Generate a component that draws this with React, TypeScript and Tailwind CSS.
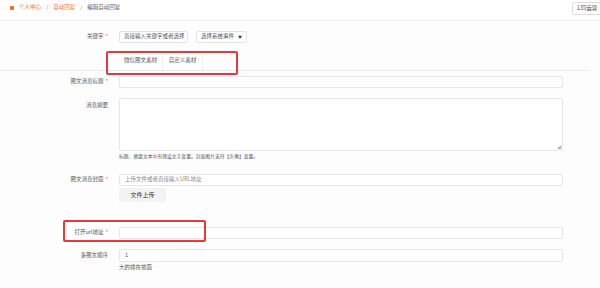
import React from "react";

const Req = () => <span className="text-[#e4393c] ml-[2px]">*</span>;

function Row({ label, required, top, children }: { label: string; required?: boolean; top?: boolean; children: React.ReactNode }) {
  return (
    <div className={`flex ${top ? "items-start" : "items-center"}`}>
      <div className={`w-[119px] pr-[11px] text-right text-[#555] whitespace-nowrap ${top ? "pt-[5px]" : ""}`}>
        {label}
        {required && <Req />}
      </div>
      <div className="w-[444px]">{children}</div>
    </div>
  );
}

export default function App() {
  return (
    <div
      className="relative w-[600px] h-[288px] overflow-hidden bg-[#fdfdfd] text-[5.5px] leading-none"
      style={{ fontFamily: '"Noto Sans CJK SC", "Noto Sans", sans-serif' }}
    >
      <div className="flex h-[21px] items-start justify-between border-b border-[#f0f0f0] bg-white pl-[10px]">
        <div className="flex items-center gap-[3px] pt-[5px] text-[#ff6a2a]">
          <span className="mr-[2px] inline-block h-[4px] w-[4px] rounded-[1px] bg-[#ff6a2a]" />
          <span>个人中心</span>
          <span className="mx-[2px] text-[#888]">/</span>
          <span>自动回复</span>
          <span className="mx-[2px] text-[#888]">/</span>
          <span className="text-[#555]">编辑自动回复</span>
        </div>
        <div className="mt-[2px] mr-[-1px] flex h-[13px] w-[29px] items-center whitespace-nowrap rounded-[2px] border border-[#ddd] bg-white pl-[4px] text-[#444]">
          135运营
        </div>
      </div>

      <div className="pt-[10px]">
        <Row label="关键字" required>
          <div className="flex gap-[8px]">
            <div className="flex h-[12px] w-[69px] items-center whitespace-nowrap rounded-[2px] border border-[#e3e3e3] bg-white px-[4px] text-[#555]">
              直接输入关键字或者选择
            </div>
            <div className="flex h-[12px] w-[51px] items-center justify-between whitespace-nowrap rounded-[2px] border border-[#e3e3e3] bg-white px-[4px] text-[#555]">
              <span>选择系统事件</span>
              <span className="text-[4px] text-[#333]">▼</span>
            </div>
          </div>
        </Row>

        <div className="mt-[11px] w-[590px] border-b border-[#eaeaea] pl-[119px]">
          <div className="flex h-[16px]">
            <div className="flex w-[44px] items-center justify-center whitespace-nowrap border-r border-[#eee] bg-white pb-[2px] text-[#555]">微信图文素材</div>
            <div className="flex w-[40px] items-center justify-center whitespace-nowrap border-r border-[#eee] bg-white pb-[2px] text-[#555]">自定义素材</div>
          </div>
        </div>

        <div className="mt-[5px] flex flex-col">
          <Row label="图文消息标题" required>
            <div className="h-[12px] rounded-[2px] border border-[#e6e6e6] bg-white" />
          </Row>

          <div className="mt-[10px]">
            <Row label="消息摘要" top>
              <div className="relative h-[53px] rounded-[2px] border border-[#e6e6e6] bg-white">
                <span className="absolute bottom-[1px] right-[1px] text-[4px] text-[#aaa]">◢</span>
              </div>
            </Row>
          </div>
          <div className="mt-[3px] pl-[119px] text-[4.8px] text-[#555]">
            标题、摘要文本中有预设文字变量。封面图片支持【头像】变量。
          </div>

          <div className="mt-[15px]">
            <Row label="图文消息封面" required>
              <div className="flex h-[12px] items-center rounded-[2px] border border-[#e6e6e6] bg-white px-[5px] text-[#888]">
                上传文件或者直接输入URL地址
              </div>
            </Row>
          </div>
          <div className="mt-[2px] pl-[119px]">
            <div className="flex h-[14px] w-[47px] items-center justify-center rounded-[2px] bg-[#f3f3f3] text-[6px] text-[#333]">
              文件上传
            </div>
          </div>

          <div className="mt-[25px]">
            <Row label="打开url地址" required>
              <div className="h-[12px] rounded-[2px] border border-[#e6e6e6] bg-white" />
            </Row>
          </div>

          <div className="mt-[10px]">
            <Row label="多图文顺序">
              <div className="flex h-[13px] items-center rounded-[2px] border border-[#e6e6e6] bg-white px-[5px] text-[#555]">1</div>
            </Row>
          </div>
          <div className="mt-[3px] pl-[119px] text-[#555]">大的排在前面</div>
        </div>
      </div>

      <div className="pointer-events-none absolute left-[106px] top-[51px] h-[24px] w-[132px] rounded-[2px] border-2 border-[#e8383b]" />
      <div className="pointer-events-none absolute left-[63px] top-[220px] h-[22px] w-[143px] rounded-[2px] border-2 border-[#e8383b]" />
    </div>
  );
}
